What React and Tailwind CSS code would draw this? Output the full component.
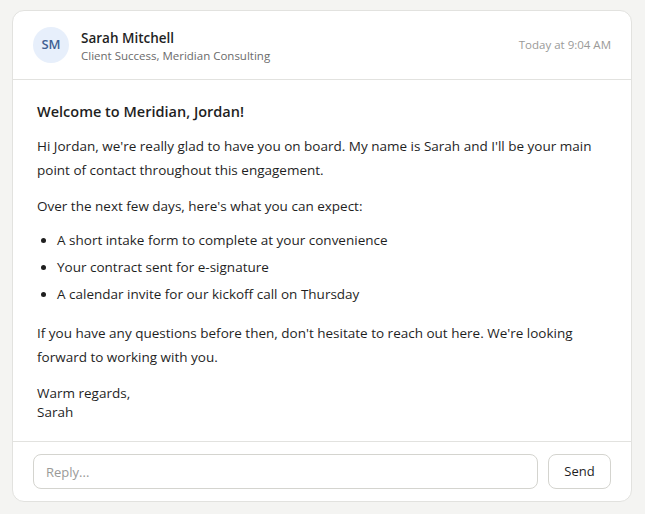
import React from 'react'

const ITEMS = [
  'A short intake form to complete at your convenience',
  'Your contract sent for e-signature',
  'A calendar invite for our kickoff call on Thursday',
]

export default function App() {
  return (
    <div
      className="min-h-screen bg-[#f4f4f2] px-3 pt-[10px] pb-3"
      style={{ fontFamily: '"Open Sans", "Noto Sans", sans-serif' }}
    >
      <div className="w-[620px] bg-white border border-[#e2e2df] rounded-xl flex flex-col">
        {/* Header */}
        <div className="h-[69px] flex items-center px-5 border-b border-[#e2e2df]">
          <div className="w-9 h-9 rounded-full bg-[#e7effb] flex items-center justify-center text-[13px] font-semibold text-[#3f5f93]">
            SM
          </div>
          <div className="ml-3 flex-1 leading-tight pt-1">
            <div className="text-[13.5px] font-semibold text-[#1f1f1f]">Sarah Mitchell</div>
            <div className="text-[11.5px] text-[#6b6b6b] mt-[2px]">Client Success, Meridian Consulting</div>
          </div>
          <div className="text-[11.5px] text-[#9a9a98]">Today at 9:04 AM</div>
        </div>

        {/* Body */}
        <div className="px-6 pt-5 pb-[19px] text-[13.5px] text-[#1f1f1f]">
          <div className="text-[14.5px] font-semibold leading-6 mb-[10px]">Welcome to Meridian, Jordan!</div>
          <p className="leading-6 mb-3">
            Hi Jordan, we're really glad to have you on board. My name is Sarah and I'll be your main point of contact throughout this engagement.
          </p>
          <p className="leading-6 mb-[9px]">Over the next few days, here's what you can expect:</p>
          <ul className="list-disc pl-5 mb-[13px]">
            {ITEMS.map((t) => (
              <li key={t} className="leading-[27px]">{t}</li>
            ))}
          </ul>
          <p className="leading-6 mb-[15px]">
            If you have any questions before then, don't hesitate to reach out here. We're looking forward to working with you.
          </p>
          <p className="leading-[19px]">
            Warm regards,
            <br />
            Sarah
          </p>
        </div>

        {/* Reply */}
        <div className="border-t border-[#e2e2df] px-5 py-3 flex gap-[10px]">
          <input
            placeholder="Reply..."
            className="flex-1 h-[35px] rounded-lg border border-[#d4d4cf] px-3 text-[13px] placeholder:text-[#9a9a98] outline-none"
          />
          <button className="w-[63px] h-[35px] rounded-lg border border-[#d4d4cf] text-[13px] text-[#1f1f1f] bg-white">
            Send
          </button>
        </div>
      </div>
    </div>
  )
}
